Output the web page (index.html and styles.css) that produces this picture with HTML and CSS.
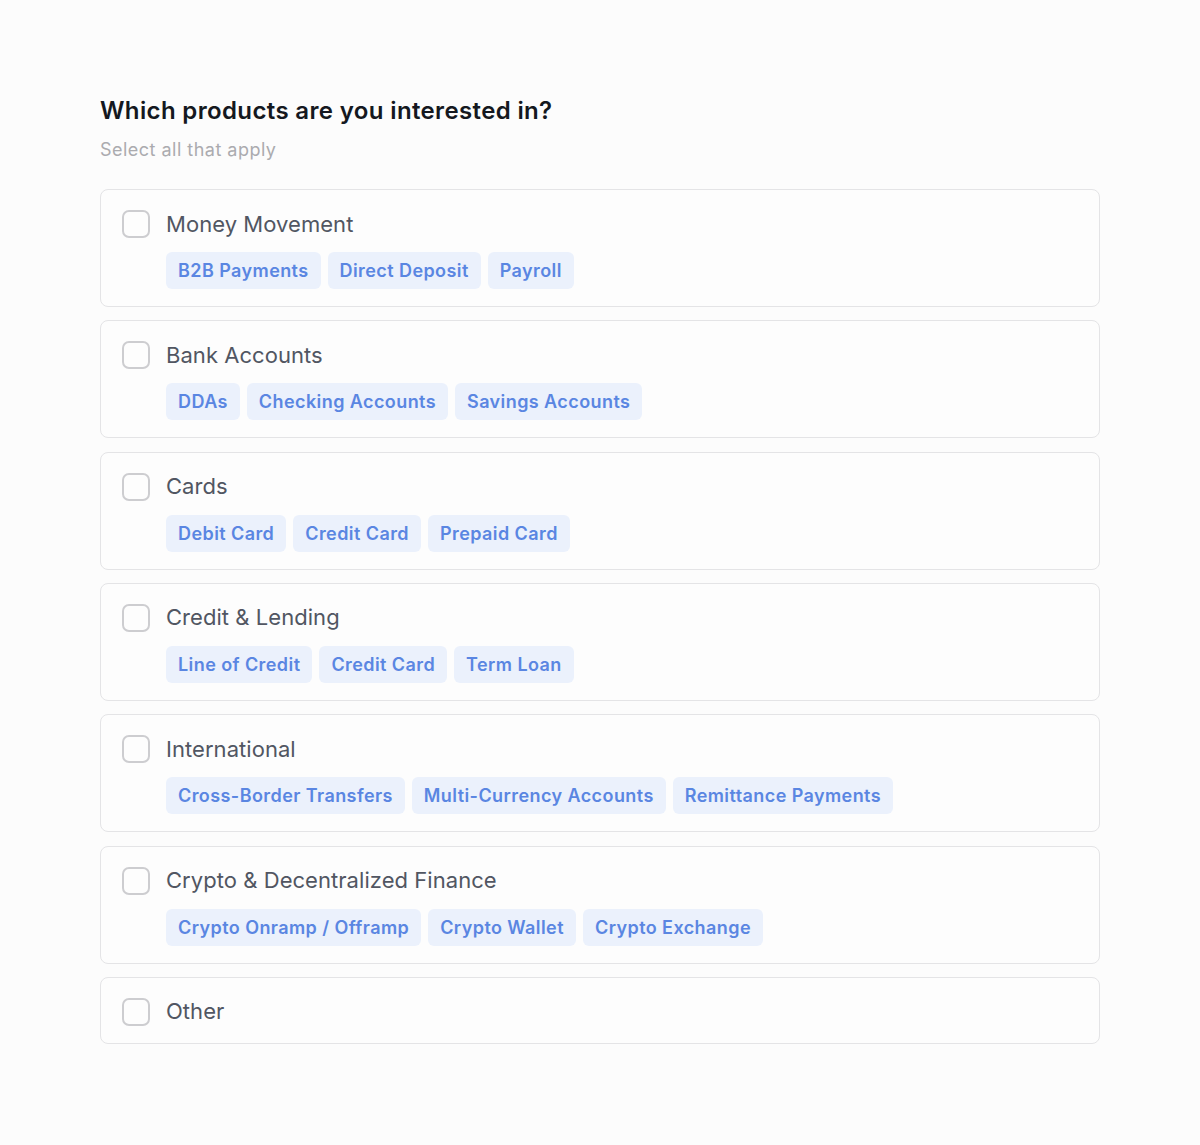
FILE: index.html
```html
<!DOCTYPE html>
<html lang="en">
<head>
<meta charset="utf-8">
<title>Products</title>
<link rel="stylesheet" href="styles.css">
</head>
<body>
<main class="page">
  <h1 class="title">Which products are you interested in?</h1>
  <p class="subtitle">Select all that apply</p>
  <div class="list">
    <div class="card">
      <div class="head"><span class="box"></span><span class="label">Money Movement</span></div>
      <div class="tags"><span class="tag">B2B Payments</span><span class="tag">Direct Deposit</span><span class="tag">Payroll</span></div>
    </div>
    <div class="card">
      <div class="head"><span class="box"></span><span class="label">Bank Accounts</span></div>
      <div class="tags"><span class="tag">DDAs</span><span class="tag">Checking Accounts</span><span class="tag">Savings Accounts</span></div>
    </div>
    <div class="card">
      <div class="head"><span class="box"></span><span class="label">Cards</span></div>
      <div class="tags"><span class="tag">Debit Card</span><span class="tag">Credit Card</span><span class="tag">Prepaid Card</span></div>
    </div>
    <div class="card">
      <div class="head"><span class="box"></span><span class="label">Credit &amp; Lending</span></div>
      <div class="tags"><span class="tag">Line of Credit</span><span class="tag">Credit Card</span><span class="tag">Term Loan</span></div>
    </div>
    <div class="card">
      <div class="head"><span class="box"></span><span class="label">International</span></div>
      <div class="tags"><span class="tag">Cross-Border Transfers</span><span class="tag">Multi-Currency Accounts</span><span class="tag">Remittance Payments</span></div>
    </div>
    <div class="card">
      <div class="head"><span class="box"></span><span class="label">Crypto &amp; Decentralized Finance</span></div>
      <div class="tags"><span class="tag">Crypto Onramp / Offramp</span><span class="tag">Crypto Wallet</span><span class="tag">Crypto Exchange</span></div>
    </div>
    <div class="card">
      <div class="head"><span class="box"></span><span class="label">Other</span></div>
    </div>
  </div>
</main>
</body>
</html>
```

FILE: styles.css
```css
* { box-sizing: border-box; }
html, body { margin: 0; padding: 0; }
body {
  background: #fcfcfc;
  font-family: Inter, "Noto Sans", sans-serif;
  color: #111827;
}
.page {
  width: 1000px;
  margin: 0 auto;
  padding-top: 95px;
}
.title {
  margin: 0;
  font-size: 24px;
  line-height: 32px;
  font-weight: 600;
  color: #141820;
  letter-spacing: 0.36px;
}
.subtitle {
  margin: 10px 0 0;
  font-size: 18px;
  line-height: 26px;
  color: #ababaf;
  letter-spacing: 0.48px;
}
.list {
  margin-top: 26px;
  display: flex;
  flex-direction: column;
  gap: 13.33px;
}
.card {
  background: #fdfdfd;
  border: 1px solid #e4e4e6;
  border-radius: 8px;
  padding: 20px 20px 17px 21px;
}
.head {
  display: flex;
  align-items: center;
  gap: 16px;
  height: 28px;
}
.box {
  width: 28px;
  height: 28px;
  border: 2px solid #cdcdd0;
  border-radius: 7px;
  background: #fdfdfd;
  flex: none;
}
.label {
  font-size: 22px;
  line-height: 27px;
  color: #515662;
  letter-spacing: 0.05px;
}
.tags {
  margin-top: 14px;
  margin-left: 44px;
  display: flex;
  gap: 7px;
}
.tag {
  background: #ebf1fc;
  color: #5a86e2;
  font-size: 18px;
  font-weight: 600;
  line-height: 37px;
  height: 37px;
  padding: 0 12px;
  border-radius: 6px;
  letter-spacing: 0.42px;
}
```
